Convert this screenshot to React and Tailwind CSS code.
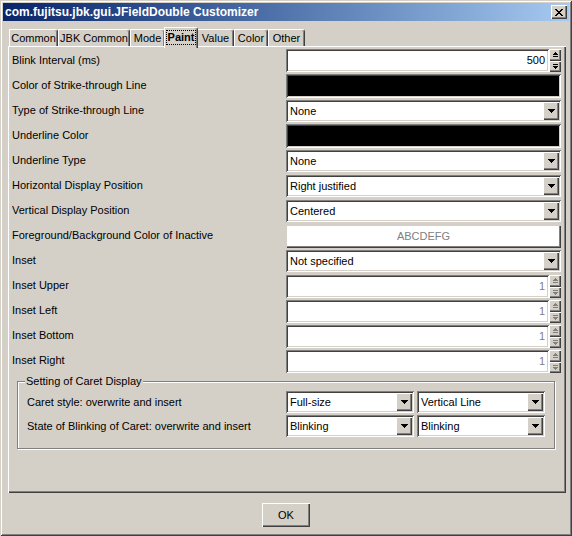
import React from "react";

const SUNKEN =
  "shadow-[inset_1px_1px_#808080,inset_-1px_-1px_#ffffff,inset_2px_2px_#404040,inset_-2px_-2px_#d4d0c8]";
const RAISED =
  "shadow-[inset_1px_1px_#ffffff,inset_-1px_-1px_#404040,inset_-2px_-2px_#808080]";
const FRAME =
  "shadow-[inset_1px_1px_#d4d0c8,inset_-1px_-1px_#404040,inset_2px_2px_#ffffff,inset_-2px_-2px_#808080]";

function DownTri() {
  return (
    <svg width="7" height="4" viewBox="0 0 7 4" shapeRendering="crispEdges">
      <path d="M0 0h7v1H0zM1 1h5v1H1zM2 2h3v1H2zM3 3h1v1H3z" fill="#000" />
    </svg>
  );
}

function Combo({ value, className = "" }) {
  return (
    <div className={`h-[22px] bg-white p-[2px] flex ${SUNKEN} ${className}`}>
      <div className="flex-1 pl-[2px] text-[11px] leading-[18px] text-black whitespace-nowrap overflow-hidden">
        {value}
      </div>
      <div className={`w-[16px] h-[18px] bg-[#d4d0c8] flex items-center justify-center ${RAISED}`}>
        <DownTri />
      </div>
    </div>
  );
}

function SpinBtn({ up, disabled }) {
  const fill = disabled ? "#808080" : "#000";
  return (
    <div className={`flex-1 bg-[#d4d0c8] flex items-center justify-center ${RAISED}`}>
      <svg width="5" height="5" viewBox="0 0 5 5" shapeRendering="crispEdges">
        {up ? (
          <path d="M2 0h1v1h1v1h1v1H0V2h1V1h1zM0 4h5v1H0z" fill={fill} />
        ) : (
          <path d="M0 0h5v1H0zM0 2h5v1H4v1H3v1H2V4H1V3H0z" fill={fill} />
        )}
      </svg>
    </div>
  );
}

function Spinner({ value, disabled, className = "" }) {
  return (
    <div className={`h-[23px] flex ${className}`}>
      <div
        className={`flex-1 bg-white p-[2px] text-right pr-[4px] text-[11px] leading-[19px] ${SUNKEN} ${
          disabled ? "text-[#808080]" : "text-black"
        }`}
      >
        {value}
      </div>
      <div className="w-[12px] flex flex-col">
        <SpinBtn up disabled={disabled} />
        <SpinBtn disabled={disabled} />
      </div>
    </div>
  );
}

function BlackBox() {
  return (
    <div className="h-[24px] mt-[1px] bg-black shadow-[inset_1px_1px_#808080,inset_-1px_-1px_#ffffff,inset_2px_2px_#404040,inset_-2px_-2px_#d4d0c8]" />
  );
}

function Tab({ label, w, selected }) {
  if (selected) {
    return (
      <div
        className={`relative z-10 -mx-[1px] -mb-[2px] h-[21px] bg-[#d4d0c8] border-t border-l border-white border-r border-r-[#404040] rounded-tr-[3px] shadow-[inset_-1px_0_#808080] flex items-start justify-center pt-[2px] text-[11px] text-black font-bold`}
        style={{ width: w + 2 }}
      >
        <span className="border border-dotted border-black px-[1px] leading-[13px]">{label}</span>
      </div>
    );
  }
  return (
    <div
      className="h-[17px] bg-[#d4d0c8] border-t border-l border-white border-r border-r-[#404040] rounded-tr-[3px] shadow-[inset_-1px_0_#808080] flex items-center justify-center text-[11px] text-black whitespace-nowrap"
      style={{ width: w }}
    >
      {label}
    </div>
  );
}

function Row({ label, children }) {
  return (
    <div className="grid grid-cols-[274px_275px] h-[25px]">
      <div className="text-[11px] leading-[25px] text-black whitespace-nowrap">{label}</div>
      <div>{children}</div>
    </div>
  );
}

export default function App() {
  const tabs = [
    ["Common", 49],
    ["JBK Common", 72],
    ["Mode", 35],
    ["Paint", 32, true],
    ["Value", 37],
    ["Color", 34],
    ["Other", 37],
  ];
  return (
    <div
      className={`w-[572px] h-[536px] bg-[#d4d0c8] p-[3px] flex flex-col font-['Liberation_Sans',Arial,sans-serif] ${FRAME}`}
    >
      {/* title bar */}
      <div className="h-[18px] shrink-0 bg-linear-to-r from-[#0a246a] to-[#a6caf0] flex items-center justify-between pl-[2px]">
        <span className="text-white font-bold text-[12px] leading-[18px] whitespace-nowrap">
          com.fujitsu.jbk.gui.JFieldDouble Customizer
        </span>
        <div className={`w-[16px] h-[14px] mr-[2px] bg-[#d4d0c8] flex items-center justify-center ${RAISED}`}>
          <svg width="8" height="7" viewBox="0 0 8 7" shapeRendering="crispEdges">
            <path
              d="M0 0h2v1H0zM6 0h2v1H6zM1 1h2v1H1zM5 1h2v1H5zM2 2h4v1H2zM3 3h2v1H3zM2 4h4v1H2zM1 5h2v1H1zM5 5h2v1H5zM0 6h2v1H0zM6 6h2v1H6z"
              fill="#000"
            />
          </svg>
        </div>
      </div>

      {/* tabs */}
      <div className="h-[25px] shrink-0 flex items-end pl-[6px]">
        {tabs.map(([l, w, s]) => (
          <Tab key={l} label={l} w={w} selected={s} />
        ))}
      </div>

      {/* panel */}
      <div
        className={`h-[447px] shrink-0 ml-[5px] mr-[3px] pt-[2px] pl-[4px] shadow-[inset_1px_1px_#ffffff,inset_-1px_-1px_#404040,inset_-2px_-2px_#808080]`}
      >
        <Row label="Blink Interval (ms)">
          <Spinner value="500" className="mt-[1px]" />
        </Row>
        <Row label="Color of Strike-through Line">
          <BlackBox />
        </Row>
        <Row label="Type of Strike-through Line">
          <Combo value="None" className="mt-[2px]" />
        </Row>
        <Row label="Underline Color">
          <BlackBox />
        </Row>
        <Row label="Underline Type">
          <Combo value="None" className="mt-[2px]" />
        </Row>
        <Row label="Horizontal Display Position">
          <Combo value="Right justified" className="mt-[2px]" />
        </Row>
        <Row label="Vertical Display Position">
          <Combo value="Centered" className="mt-[2px]" />
        </Row>
        <Row label="Foreground/Background Color of Inactive">
          <div className="h-[23px] mt-[2px] bg-white flex items-center justify-center text-[11px] text-[#808080] shadow-[inset_1px_1px_#d4d0c8,inset_-1px_-1px_#404040,inset_-2px_-2px_#808080]">
            ABCDEFG
          </div>
        </Row>
        <Row label="Inset">
          <Combo value="Not specified" className="mt-[2px]" />
        </Row>
        <Row label="Inset Upper">
          <Spinner value="1" disabled className="mt-[2px]" />
        </Row>
        <Row label="Inset Left">
          <Spinner value="1" disabled className="mt-[2px]" />
        </Row>
        <Row label="Inset Bottom">
          <Spinner value="1" disabled className="mt-[2px]" />
        </Row>
        <Row label="Inset Right">
          <Spinner value="1" disabled className="mt-[2px]" />
        </Row>

        {/* group box */}
        <div className="relative mt-[8px] ml-[5px] w-[538px] border border-[#808080] shadow-[1px_1px_0_#ffffff,inset_1px_1px_0_#ffffff] pt-[8px] pb-[10px] pl-[9px]">
          <span className="absolute -top-[7px] left-[7px] bg-[#d4d0c8] px-[1px] text-[11px] leading-[13px] text-black whitespace-nowrap">
            Setting of Caret Display
          </span>
          <div className="flex h-[24px] items-center">
            <div className="w-[259px] text-[11px] text-black whitespace-nowrap">Caret style: overwrite and insert</div>
            <div className="flex gap-[3px]">
              <Combo value="Full-size" className="w-[128px]" />
              <Combo value="Vertical Line" className="w-[128px]" />
            </div>
          </div>
          <div className="flex h-[24px] items-center">
            <div className="w-[259px] text-[11px] text-black whitespace-nowrap">
              State of Blinking of Caret: overwrite and insert
            </div>
            <div className="flex gap-[3px]">
              <Combo value="Blinking" className="w-[128px]" />
              <Combo value="Blinking" className="w-[128px]" />
            </div>
          </div>
        </div>
      </div>

      {/* bottom */}
      <div className="flex-1 flex justify-center pt-[10px]">
        <button
          className={`w-[48px] h-[24px] bg-[#d4d0c8] text-[11px] text-black ${RAISED}`}
        >
          OK
        </button>
      </div>
    </div>
  );
}
